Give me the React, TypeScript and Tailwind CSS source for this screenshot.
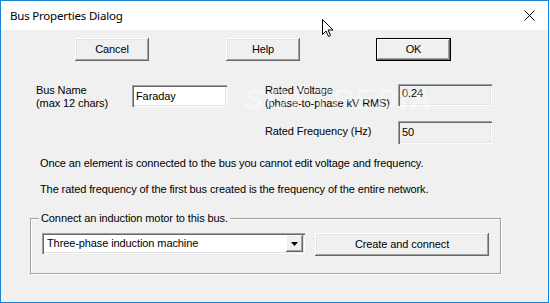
import React from 'react';

const font = { fontFamily: '"Liberation Sans", Arial, sans-serif' };

// classic raised 3d button
function WinButton({ className = '', isDefault = false, children }: { className?: string; isDefault?: boolean; children: React.ReactNode }) {
  return (
    <div
      className={
        'flex items-center justify-center bg-[#f0f0f0] text-[11px] text-black ' +
        (isDefault
          ? 'border border-[#000000] shadow-[inset_-1px_-1px_#696969,inset_1px_1px_#ffffff,inset_-2px_-2px_#a0a0a0] '
          : 'shadow-[inset_-1px_-1px_#696969,inset_1px_1px_#ffffff,inset_-2px_-2px_#a0a0a0,inset_2px_2px_#e3e3e3] ') +
        className
      }
    >
      {children}
    </div>
  );
}

function Field({ value, className = '', readOnly = false }: { value: string; className?: string; readOnly?: boolean }) {
  return (
    <div
      className={
        'flex items-center pl-[4px] text-[11px] text-black shadow-[inset_1px_1px_#a0a0a0,inset_2px_2px_#696969,inset_-1px_-1px_#ffffff,inset_-2px_-2px_#e3e3e3] ' +
        (readOnly ? 'bg-[#f0f0f0] ' : 'bg-white ') +
        className
      }
    >
      {value}
    </div>
  );
}

export default function App() {
  return (
    <div className="relative w-[550px] h-[303px] bg-white overflow-hidden" style={font}>
      <div className="flex flex-col w-[549px] h-[303px] border border-[#1883d7]">
        {/* title bar */}
        <div className="flex items-center justify-between h-[29px] bg-white pl-[9px] pr-[9px]">
          <span className="text-[11.5px] text-black tracking-[-0.2px]" style={{ fontFamily: '"Noto Sans", "Open Sans", sans-serif' }}>
            Bus Properties Dialog
          </span>
          <svg width="11" height="11" viewBox="0 0 11 11" className="mr-[4px]">
            <path d="M0.5 0.5 L10.5 10.5 M10.5 0.5 L0.5 10.5" stroke="#000" strokeWidth="1" />
          </svg>
        </div>

        <div className="flex flex-col flex-1 bg-[#f0f0f0] text-[11px] text-black leading-[13px] tracking-[-0.1px]">
          {/* buttons */}
          <div className="flex mt-[8px] h-[23px]">
            <WinButton className="ml-[74px] w-[74px] h-[23px]">Cancel</WinButton>
            <WinButton className="ml-[77px] w-[74px] h-[23px]">Help</WinButton>
            <WinButton isDefault className="ml-[76px] w-[75px] h-[23px]">OK</WinButton>
          </div>

          {/* properties */}
          <div className="flex mt-[23px]">
            <div className="ml-[35px] w-[96px]">
              <div>Bus Name</div>
              <div>(max 12 chars)</div>
            </div>
            <Field value="Faraday" className="w-[95px] h-[22px] mt-[1px]" />
            <div className="ml-[38px] grid grid-cols-[133px_94px] gap-y-[11px]">
              <div>
                <div>Rated Voltage</div>
                <div>(phase-to-phase kV RMS)</div>
              </div>
              <Field value="0.24" readOnly className="h-[22px] items-start pt-[3px]" />
              <div className="flex items-center -mt-[2px]">Rated Frequency (Hz)</div>
              <Field value="50" readOnly className="h-[23px]" />
            </div>
          </div>

          <div className="ml-[39px] mt-[13px]">
            Once an element is connected to the bus you cannot edit voltage and frequency.
          </div>
          <div className="ml-[39px] mt-[13px]">
            The rated frequency of the first bus created is the frequency of the entire network.
          </div>

          {/* group box */}
          <div className="relative ml-[29px] mt-[22px] w-[471px] h-[56px] border border-[#a0a0a0] shadow-[1px_1px_0_#ffffff,inset_1px_1px_0_#ffffff]">
            <span className="absolute left-[8px] top-[-7px] px-[2px] bg-[#f0f0f0]">
              Connect an induction motor to this bus.
            </span>
            <div className="flex mt-[14px] ml-[11px]">
              <div className="flex w-[263px] h-[21px] bg-white shadow-[inset_1px_1px_#a0a0a0,inset_2px_2px_#696969,inset_-1px_-1px_#ffffff,inset_-2px_-2px_#e3e3e3]">
                <div className="flex-1 flex items-center pl-[5px]">Three-phase induction machine</div>
                <div className="flex items-center justify-center w-[17px] h-[17px] mt-[2px] mr-[2px] bg-[#f0f0f0] shadow-[inset_-1px_-1px_#696969,inset_1px_1px_#ffffff,inset_-2px_-2px_#a0a0a0]">
                  <svg width="7" height="4" viewBox="0 0 7 4">
                    <path d="M0 0 H7 L3.5 4 Z" fill="#000" />
                  </svg>
                </div>
              </div>
              <WinButton className="ml-[10px] w-[174px] h-[23px]">Create and connect</WinButton>
            </div>
          </div>
        </div>
      </div>

      {/* faint watermark */}
      <div className="absolute left-[244px] top-[76px] text-[30px] font-bold italic tracking-[2px] text-white/40 select-none pointer-events-none">
        SOFTPEDIA
      </div>

      {/* mouse pointer */}
      <svg className="absolute left-[322px] top-[19px]" width="13" height="19" viewBox="0 0 13 19">
        <path d="M0.5 0.5 L0.5 15.5 L4 12 L6.5 17.5 L8.5 16.5 L6 11 L11 11 Z" fill="#fff" stroke="#000" strokeWidth="1" />
      </svg>
    </div>
  );
}
